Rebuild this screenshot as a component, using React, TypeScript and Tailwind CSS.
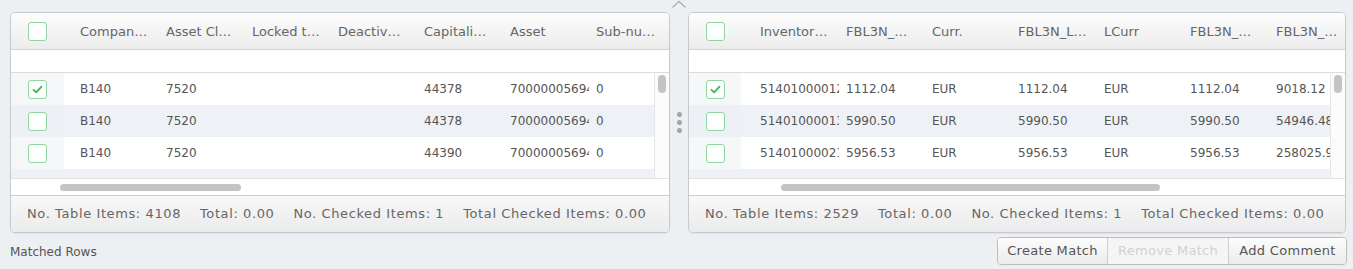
import React from "react";

type Panel = {
  headers: string[];
  rows: string[][];
  checked: number[];
  footer: string[];
  checkColWidth: string;
  spacerWidth: string;
  thumbLeft: string;
  thumbWidth: string;
  width: string;
};

const LEFT: Panel = {
  headers: ["Compan…", "Asset Cl…", "Locked t…", "Deactiv…", "Capitali…", "Asset", "Sub-nu…"],
  rows: [
    ["B140", "7520", "", "", "44378", "70000005694", "0"],
    ["B140", "7520", "", "", "44378", "70000005694", "0"],
    ["B140", "7520", "", "", "44390", "70000005694", "0"],
  ],
  checked: [0],
  footer: ["No. Table Items: 4108", "Total: 0.00", "No. Checked Items: 1", "Total Checked Items: 0.00"],
  checkColWidth: "w-[53px]",
  spacerWidth: "w-[12px]",
  thumbLeft: "ml-[49px]",
  thumbWidth: "w-[181px]",
  width: "w-[660px]",
};

const RIGHT: Panel = {
  headers: ["Inventor…", "FBL3N_…", "Curr.", "FBL3N_L…", "LCurr", "FBL3N_…", "FBL3N_…"],
  rows: [
    ["51401000012", "1112.04", "EUR", "1112.04", "EUR", "1112.04", "9018.12"],
    ["51401000013", "5990.50", "EUR", "5990.50", "EUR", "5990.50", "54946.48"],
    ["51401000021", "5956.53", "EUR", "5956.53", "EUR", "5956.53", "258025.91"],
  ],
  checked: [0],
  footer: ["No. Table Items: 2529", "Total: 0.00", "No. Checked Items: 1", "Total Checked Items: 0.00"],
  checkColWidth: "w-[52px]",
  spacerWidth: "w-[15px]",
  thumbLeft: "ml-[92px]",
  thumbWidth: "w-[379px]",
  width: "w-[658px]",
};

const Checkbox = ({ checked }: { checked?: boolean }) => (
  <div className="w-[19px] h-[19px] rounded-[3px] border-[1.5px] border-[#8fd5a2] bg-white flex items-center justify-center">
    {checked && (
      <svg width="11" height="9" viewBox="0 0 11 9" fill="none">
        <path d="M1.5 4.8 L4.2 7.3 L9.5 1.6" stroke="#3fb35e" strokeWidth="1.8" strokeLinecap="round" strokeLinejoin="round" />
      </svg>
    )}
  </div>
);

const TablePanel = ({ p }: { p: Panel }) => (
  <div className={`${p.width} h-[221px] flex flex-col border border-[#c6c9cd] rounded-[5px] overflow-hidden bg-white shadow-[0_1px_1px_rgba(0,0,0,0.06)]`}>
    <div className="h-[37px] shrink-0 flex items-center pt-[1px] border-b border-[#d4d4d4] bg-gradient-to-b from-[#fdfdfd] to-[#ececec]">
      <div className={`${p.checkColWidth} shrink-0 flex justify-center`}>
        <Checkbox />
      </div>
      <div className={`${p.spacerWidth} shrink-0`} />
      {p.headers.map((h, i) => (
        <div key={i} className="w-[86px] shrink-0 pl-[4px] text-[13px] text-[#666] whitespace-nowrap overflow-hidden">
          {h}
        </div>
      ))}
    </div>
    <div className="h-[23px] shrink-0 border-b border-[#dcdcdc] bg-white" />
    <div className="flex-1 flex min-h-0">
      <div className="flex-1 overflow-hidden bg-[#eef2f6]">
        {p.rows.map((r, ri) => {
          const alt = ri % 2 === 1;
          return (
            <div key={ri} className={`h-[32px] flex items-center ${alt ? "bg-[#eef2f6]" : "bg-white"}`}>
              <div className={`${p.checkColWidth} h-full shrink-0 flex items-center justify-center ${alt ? "bg-[#edf1f5]" : "bg-[#f6f7f8]"}`}>
                <Checkbox checked={p.checked.includes(ri)} />
              </div>
              <div className={`${p.spacerWidth} shrink-0`} />
              {r.map((c, ci) => (
                <div key={ci} className="w-[86px] shrink-0 pl-[4px] pr-[3px]">
                  <div className="overflow-hidden whitespace-nowrap text-[12px] text-[#555]">{c}</div>
                </div>
              ))}
            </div>
          );
        })}
      </div>
      <div className="w-[15px] shrink-0 bg-[#fbfbfb] border-l border-[#e6e6e6] flex justify-center pt-[2px]">
        <div className="w-[8px] h-[18px] rounded-full bg-[#c4c4c4]" />
      </div>
    </div>
    <div className="h-[17px] shrink-0 border-t border-[#e2e2e2] bg-white flex items-center">
      <div className={`${p.thumbLeft} ${p.thumbWidth} h-[7px] rounded-full bg-[#c4c4c4]`} />
    </div>
    <div className="h-[37px] shrink-0 border-t border-[#cfcfcf] bg-gradient-to-b from-[#f8f8f8] to-[#ebebeb] flex items-center gap-[19px] pl-[16px] text-[13px] tracking-[0.6px] text-[#666] whitespace-nowrap">
      {p.footer.map((f, i) => (
        <span key={i}>{f}</span>
      ))}
    </div>
  </div>
);

export default function App() {
  return (
    <div className="w-[1353px] h-[269px] bg-[#edf0f3] overflow-hidden" style={{ fontFamily: '"DejaVu Sans", sans-serif' }}>
      <div className="flex pl-[10px]">
        <div className="pt-[12px]">
          <TablePanel p={LEFT} />
        </div>
        <div className="w-[18px] shrink-0 flex flex-col items-center">
          <svg width="14" height="8" viewBox="0 0 14 8" fill="none">
            <path d="M1 7 L7 1.5 L13 7" stroke="#a9adb2" strokeWidth="1.3" strokeLinecap="round" strokeLinejoin="round" />
          </svg>
          <div className="mt-[104px] flex flex-col gap-[3px]">
            <div className="w-[5px] h-[5px] rounded-full bg-[#a3a3a3]" />
            <div className="w-[5px] h-[5px] rounded-full bg-[#a3a3a3]" />
            <div className="w-[5px] h-[5px] rounded-full bg-[#a3a3a3]" />
          </div>
        </div>
        <div className="pt-[12px]">
          <TablePanel p={RIGHT} />
        </div>
      </div>
      <div className="mt-[4px] h-[28px] flex items-center justify-between pl-[10px] pr-[6px]">
        <span className="text-[12px] text-[#555] pt-[2px]">Matched Rows</span>
        <div className="flex h-[28px] border border-[#bdbdbd] rounded-[4px] overflow-hidden text-[13px] tracking-[0.3px]">
          <div className="w-[110px] flex items-center justify-center bg-gradient-to-b from-[#fdfdfd] to-[#ebebeb] text-[#555] border-r border-[#cfcfcf]">
            Create Match
          </div>
          <div className="w-[121px] flex items-center justify-center bg-[#f5f5f5] text-[#d2d2d2] border-r border-[#cfcfcf]">
            Remove Match
          </div>
          <div className="w-[117px] flex items-center justify-center bg-gradient-to-b from-[#fdfdfd] to-[#ebebeb] text-[#555]">
            Add Comment
          </div>
        </div>
      </div>
    </div>
  );
}
